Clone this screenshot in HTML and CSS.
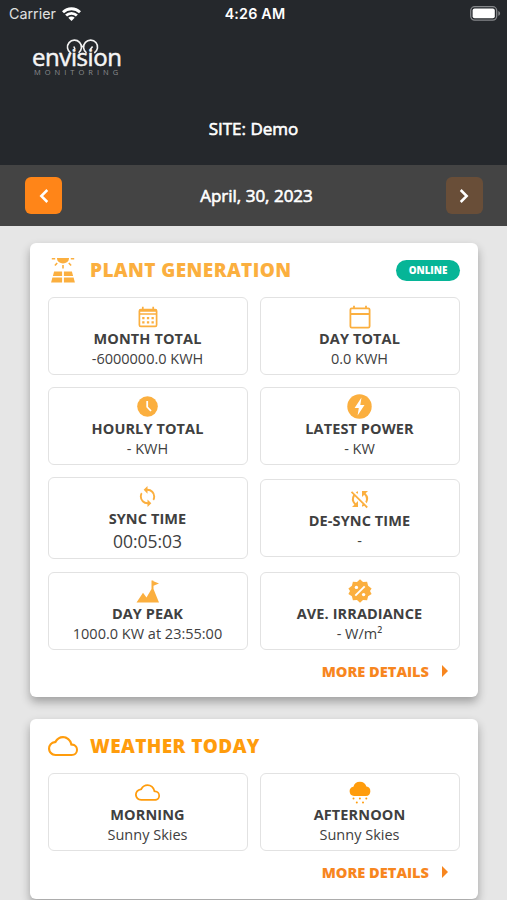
FILE: index.html
```html
<!DOCTYPE html>
<html lang="en">

<head>
    <meta charset="utf-8">
    <meta name="viewport" content="width=device-width, initial-scale=1.0">
    <title>Envision Monitoring</title>
    <link rel="stylesheet" href="styles.css">
</head>

<body>

    <header>
        <div class="status">
            <div class="carrier">
                <span>Carrier</span>
                <svg width="19" height="14" viewBox="0 0 19 14" fill="none" stroke="#fff" stroke-width="2.8">
                    <path d="M1 5.2C5.7.6 13.3.6 18 5.2M4.1 8.6c3-2.9 7.8-2.9 10.8 0" />
                    <path fill="#fff" stroke="none" d="M9.5 14l-3.2-3.3c1.8-1.6 4.6-1.6 6.4 0z" />
                </svg>
            </div>
            <span class="clock">4:26 AM</span>
            <svg class="battery" width="31" height="15" viewBox="0 0 31 15">
                <rect x=".7" y=".7" width="26" height="13.4" rx="4" fill="none" stroke="#85878a" stroke-width="1.3" />
                <rect x="2.6" y="2.6" width="22.2" height="9.6" rx="2" fill="#fff" />
                <path d="M28.3 5c2.4.8 2.4 4 0 4.8z" fill="#85878a" />
            </svg>
        </div>
        <div class="logo">
            <svg width="94" height="27" viewBox="0 0 94 27">
                <g fill="none" stroke="#f2f2f2" stroke-width="1.6">
                    <path d="M38.6 13a7 7 0 1 1 8-.2M54.5 12.8a7 7 0 1 1 7.800.2M49 6.500h3.500" />
                    <path d="M41.800 6.500l1.200 2.500M58.200 9.600l2.400-3" />
                </g>
                <text class="logo-name" x="0" y="26" textLength="90">envision</text>
            </svg>
            <span class="logo-sub">MONITORING</span>
        </div>
        <h1>SITE: Demo</h1>
    </header>

    <nav class="dates">
        <button class="prev">
            <svg width="10" height="14" viewBox="0 0 10 14"><path d="M8.3 1L2.3 7l6 6" /></svg>
        </button>
        <span>April, 30, 2023</span>
        <button class="next">
            <svg width="10" height="14" viewBox="0 0 10 14"><path d="M1.7 1l6 6-6 6" /></svg>
        </button>
    </nav>

    <main>
        <section class="card">
            <div class="card-head">
                <svg class="head-icon" width="30" height="26" viewBox="0 0 30 26">
                    <path d="M9 1h12v.4a6 5 0 0 1-12 0zM3.8 1h3.4v1.5H3.8zM22.8 1h3.4v1.5h-3.4zM14.2 8h1.6v3.5h-1.6zM8.6 5.6l1.2 1-2.3 2.5-1.2-1zM21.4 5.6l-1.2 1 2.3 2.5 1.2-1zM6.1 14.5h8v4.6H4.9zM15.9 14.5h8l1.2 4.6h-9.2zM4.4 20.6h9.7v5H3.1zM15.9 20.6h9.7l1.3 5h-11z" />
                </svg>
                <h2>PLANT GENERATION</h2>
                <span class="badge">ONLINE</span>
            </div>
            <div class="boxes">
                <div class="box">
                    <div class="icon">
                        <svg width="20" height="22" viewBox="0 0 20 22">
                            <path fill="none" stroke="#fbaf3f" stroke-width="1.7" d="M2.8 3.6h14.4q1.4 0 1.4 1.4v14q0 1.4-1.4 1.4H2.8q-1.4 0-1.4-1.4V5q0-1.4 1.4-1.4zM1.4 8h17.2M4.8.8v3M15.2.8v3" />
                            <path d="M4.2 11h2.3v2.2H4.2zM8.9 11h2.3v2.2H8.9zM13.5 11h2.3v2.2h-2.3zM4.2 15.3h2.3v2.2H4.2zM8.9 15.3h2.3v2.2H8.9zM13.5 15.3h2.3v2.2h-2.3zM2 4h16v1.8H2z" />
                        </svg>
                    </div>
                    <h3>MONTH TOTAL</h3>
                    <p>-6000000.0 KWH</p>
                </div>
                <div class="box">
                    <div class="icon">
                        <svg width="22" height="24" viewBox="0 0 22 24">
                            <path fill="none" stroke="#fbaf3f" stroke-width="1.8" d="M2.7 3.4h16.6q1.3 0 1.3 1.3v16.6q0 1.3-1.3 1.3H2.7q-1.3 0-1.3-1.3V4.7q0-1.3 1.3-1.3zM1.4 9h19.2M5 .8v3M17 .8v3" />
                        </svg>
                    </div>
                    <h3>DAY TOTAL</h3>
                    <p>0.0 KWH</p>
                </div>
                <div class="box">
                    <div class="icon">
                        <svg width="21" height="21" viewBox="0 0 21 21">
                            <circle cx="10.5" cy="10.5" r="10.3" />
                            <path fill="none" stroke="#fff" stroke-width="1.8" d="M10.2 5v6l3.8 4" />
                        </svg>
                    </div>
                    <h3>HOURLY TOTAL</h3>
                    <p>- KWH</p>
                </div>
                <div class="box">
                    <div class="icon">
                        <svg width="25" height="25" viewBox="0 0 25 25">
                            <circle cx="12.5" cy="12.5" r="12.2" />
                            <path fill="#fff" d="M14.5 3.5L7.6 14h4.2l-1.2 7.5L17.5 11h-4.2z" />
                        </svg>
                    </div>
                    <h3>LATEST POWER</h3>
                    <p>- KW</p>
                </div>
                <div class="box">
                    <div class="icon">
                        <svg width="23" height="23" viewBox="0 0 24 24">
                            <path d="M12 18a6 6 0 0 1-6-6c0-1 .25-1.97.7-2.8L5.24 7.74A7.93 7.93 0 0 0 4 12a8 8 0 0 0 8 8v3l4-4-4-4v3zM12 4V1L8 5l4 4V6a6 6 0 0 1 6 6c0 1-.25 1.97-.7 2.8l1.46 1.46A7.93 7.93 0 0 0 20 12a8 8 0 0 0-8-8z" />
                        </svg>
                    </div>
                    <h3>SYNC TIME</h3>
                    <p class="big">00:05:03</p>
                </div>
                <div class="box">
                    <div class="icon">
                        <svg width="24" height="24" viewBox="0 0 24 24">
                            <path d="M20 4h-6v6l2.24-2.24A6 6 0 0 1 18 12c0 1-.25 1.94-.68 2.77l1.46 1.46A8 8 0 0 0 17.64 6.36L20 4M2.86 5.41l2.36 2.36A8 8 0 0 0 6.36 17.64L4 20h6v-6l-2.24 2.24A6 6 0 0 1 6.68 9.23l8.08 8.08c-.26.13-.5.25-.76.34v2.09c.79-.21 1.54-.54 2.22-.96l2.36 2.36 1.27-1.27L4.14 4.14 2.86 5.41M10 6.35V4.26c-.8.21-1.55.54-2.23.96l1.46 1.46c.27-.12.5-.24.77-.33z" />
                        </svg>
                    </div>
                    <h3>DE-SYNC TIME</h3>
                    <p>-</p>
                </div>
                <div class="box">
                    <div class="icon">
                        <svg width="24" height="23" viewBox="0 0 24 23">
                            <path d="M.5 22.5l6.5-9.8 3.5 4.8 5-8.5V.5h1.7l.3.7 5.5 2.2-5.5 2.4V9l5.5 13.5z" />
                        </svg>
                    </div>
                    <h3>DAY PEAK</h3>
                    <p>1000.0 KW at 23:55:00</p>
                </div>
                <div class="box">
                    <div class="icon">
                        <svg width="24" height="24" viewBox="0 0 24 24">
                            <path d="M12 .3l3 2.7 4.1-.3 1 4.100L23.600 9.600 22 12l1.600 2.900-3.500 2.400-1 4-4.100-.3-3 2.700-3-2.700-4.100.3-1-4L.4 14.900 2 12 .4 9.600l3.500-2.800 1-4.100L9 3z" />
                            <path fill="none" stroke="#fff" stroke-width="1.9" d="M7.3 16.7l9.4-9.4" />
                            <circle cx="8.4" cy="8.4" r="1.7" fill="#fff" />
                            <circle cx="15.6" cy="15.6" r="1.7" fill="#fff" />
                        </svg>
                    </div>
                    <h3>AVE. IRRADIANCE</h3>
                    <p>- W/m²</p>
                </div>
            </div>
            <a class="more" href="#">MORE DETAILS
                <svg width="6" height="12" viewBox="0 0 6 12"><path d="M0 0l6 6-6 6z" /></svg>
            </a>
        </section>

        <section class="card weather">
            <div class="card-head">
                <svg class="head-icon" width="30" height="20" viewBox="0 4 24 16">
                    <path d="M19.35 10.04A7.49 7.49 0 0 0 12 4C9.11 4 6.6 5.64 5.35 8.04A5.994 5.994 0 0 0 0 14c0 3.31 2.69 6 6 6h13c2.76 0 5-2.24 5-5 0-2.64-2.05-4.78-4.65-4.96zM19 18.3H6A4.3 4.3 0 0 1 1.7 14c0-2.2 1.65-4.05 3.9-4.27l.9-.1.45-.8A5.7 5.7 0 0 1 12 5.7c2.75 0 5.1 1.93 5.68 4.66l.25 1.27 1.3.09A3.28 3.28 0 0 1 19 18.3z" />
                </svg>
                <h2>WEATHER TODAY</h2>
            </div>
            <div class="boxes">
                <div class="box">
                    <div class="icon">
                        <svg width="25" height="17" viewBox="0 4 24 16">
                            <path d="M19.35 10.04A7.49 7.49 0 0 0 12 4C9.11 4 6.6 5.64 5.35 8.04A5.994 5.994 0 0 0 0 14c0 3.31 2.69 6 6 6h13c2.76 0 5-2.24 5-5 0-2.64-2.05-4.78-4.65-4.96zM19 18.3H6A4.3 4.3 0 0 1 1.7 14c0-2.2 1.65-4.05 3.9-4.27l.9-.1.45-.8A5.7 5.7 0 0 1 12 5.7c2.75 0 5.1 1.93 5.68 4.66l.25 1.27 1.3.09A3.28 3.28 0 0 1 19 18.3z" />
                        </svg>
                    </div>
                    <h3>MORNING</h3>
                    <p>Sunny Skies</p>
                </div>
                <div class="box">
                    <div class="icon">
                        <svg width="22" height="23" viewBox="0 0 22 23">
                            <path d="M5 15a4.7 4.7 0 0 1-.6-9.3 6.8 6.8 0 0 1 13-.2A4.8 4.8 0 0 1 17 15z" />
                            <circle cx="4.5" cy="17.5" r="1" />
                            <circle cx="10.9" cy="17.5" r="1" />
                            <circle cx="17.3" cy="17.5" r="1" />
                            <circle cx="7.8" cy="21.5" r="1" />
                            <circle cx="14" cy="21.5" r="1" />
                        </svg>
                    </div>
                    <h3>AFTERNOON</h3>
                    <p>Sunny Skies</p>
                </div>
            </div>
            <a class="more" href="#">MORE DETAILS
                <svg width="6" height="12" viewBox="0 0 6 12"><path d="M0 0l6 6-6 6z" /></svg>
            </a>
        </section>
    </main>

</body>

</html>
```
FILE: styles.css
```css
* {
    box-sizing: border-box;
}

body {
    margin: 0;
    height: 900px;
    overflow: hidden;
    background-color: #e6e6e6;
    font-family: 'Open Sans', sans-serif;
    color: #404040;
}

svg {
    display: block;
    flex: none;
    overflow: visible;
}

h1,
h2,
h3,
p {
    margin: 0;
}

header {
    height: 165px;
    background-color: #25282c;
    color: white;
}

.status {
    display: grid;
    grid-template-columns: 1fr auto 1fr;
    align-items: center;
    height: 27px;
    padding: 0 6px 0 9px;
    font-family: Inter, sans-serif;
    font-size: 14.3px;
}

.carrier {
    display: flex;
    align-items: center;
    gap: 6px;
    color: #e0e0e0;
}

.clock {
    font-weight: 600;
    letter-spacing: 0.2px;
}

.battery {
    justify-self: end;
}

.logo {
    height: 50px;
    padding: 13px 0 0 32px;
}

.logo-name {
    font-family: 'Open Sans', sans-serif;
    font-size: 24px;
    fill: #f5f5f5;
    stroke: #f5f5f5;
    stroke-width: 0.5px;
}

.logo-sub {
    display: block;
    margin-left: 2px;
    font-size: 7.5px;
    line-height: 11px;
    letter-spacing: 4px;
    color: #8a8c8f;
}

h1 {
    margin-top: 40px;
    font-size: 17px;
    line-height: 24px;
    font-weight: 400;
    text-align: center;
    -webkit-text-stroke: 0.6px white;
}

.dates {
    display: flex;
    align-items: center;
    justify-content: space-between;
    height: 61px;
    padding: 0 24px 0 25px;
    background-color: #444444;
    color: white;
    font-size: 17px;
    -webkit-text-stroke: 0.6px white;
}

.dates span {
    padding-left: 5px;
}

.dates button {
    display: flex;
    align-items: center;
    justify-content: center;
    width: 37px;
    height: 37px;
    padding: 0;
    border: none;
    border-radius: 6px;
    background-color: #ff8518;
}

.dates .next {
    background-color: #694e38;
}

.dates path {
    fill: none;
    stroke: white;
    stroke-width: 2.5;
}

main {
    padding: 17px 29px 0 30px;
}

.card {
    height: 454px;
    margin-bottom: 22px;
    padding: 12px 18px 0;
    border-radius: 6px;
    background-color: white;
    box-shadow: 0 5px 10px rgba(0, 0, 0, 0.3);
    fill: #fbaf3f;
}

.weather {
    height: 180px;
    fill: #ff9c0c;
}

.card-head {
    display: flex;
    align-items: center;
    height: 30px;
    margin-bottom: 12px;
}

h2 {
    margin-left: 12px;
    font-size: 19px;
    font-weight: 800;
    letter-spacing: 0.4px;
    color: #fbaf3f;
}

.weather h2 {
    color: #ff9c0c;
}

.badge {
    width: 64px;
    height: 21px;
    margin-left: auto;
    border-radius: 11px;
    background-color: #06b597;
    color: white;
    font-size: 9.8px;
    line-height: 22px;
    font-weight: 800;
    text-align: center;
}

.boxes {
    display: grid;
    grid-template-columns: 1fr 1fr;
    align-items: center;
    gap: 12.2px 12px;
}

.box {
    padding: 6px 1px 5px 0;
    border: 1px solid #e2e2e2;
    border-radius: 6px;
    text-align: center;
}

.icon {
    display: flex;
    align-items: center;
    justify-content: center;
    height: 25px;
}

h3 {
    font-size: 14.5px;
    line-height: 20px;
    font-weight: 700;
    letter-spacing: 0.1px;
}

p {
    font-size: 14.5px;
    line-height: 20px;
}

.big {
    font-size: 17.5px;
    line-height: 24px;
}

.more {
    display: flex;
    align-items: center;
    justify-content: flex-end;
    gap: 13px;
    margin-top: 10px;
    padding-right: 12px;
    font-size: 14.6px;
    line-height: 22px;
    font-weight: 800;
    color: #f7861f;
    fill: #f7861f;
    text-decoration: none;
}
```
